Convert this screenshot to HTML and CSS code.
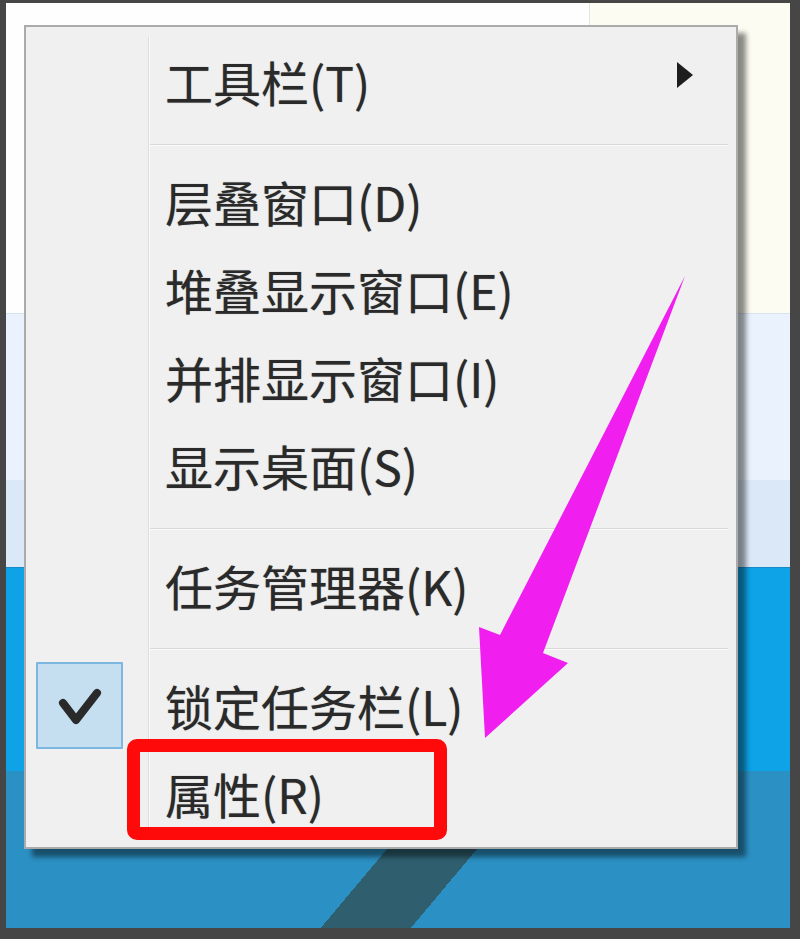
FILE: index.html
```html
<!DOCTYPE html>
<html lang="zh-CN">
<head>
    <meta charset="UTF-8">
    <meta name="viewport" content="width=device-width, initial-scale=1.0">
    <title>任务栏右键菜单</title>
    <link rel="stylesheet" href="styles.css">
</head>
<body>
<div class="screen">
    <div class="wall wall-top">
        <div class="wall-white"></div>
        <div class="wall-cream"></div>
    </div>
    <div class="wall wall-light"></div>
    <div class="wall wall-pale"></div>
    <div class="wall wall-cyan"></div>
    <div class="wall wall-deep"></div>

    <div class="menu">
        <div class="item">
            <div class="gutter"></div>
            <div class="label">工具栏(T)</div>
            <div class="submenu"></div>
        </div>
        <div class="sep"></div>
        <div class="item">
            <div class="gutter"></div>
            <div class="label">层叠窗口(D)</div>
        </div>
        <div class="item">
            <div class="gutter"></div>
            <div class="label">堆叠显示窗口(E)</div>
        </div>
        <div class="item">
            <div class="gutter"></div>
            <div class="label">并排显示窗口(I)</div>
        </div>
        <div class="item">
            <div class="gutter"></div>
            <div class="label">显示桌面(S)</div>
        </div>
        <div class="sep"></div>
        <div class="item">
            <div class="gutter"></div>
            <div class="label">任务管理器(K)</div>
        </div>
        <div class="sep"></div>
        <div class="item">
            <div class="gutter">
                <div class="check">
                    <svg width="83" height="83" viewBox="0 0 83 83">
                        <polyline points="25,39 38,56 59,29" fill="none" stroke="#2a2a2a" stroke-width="8" stroke-linejoin="round" stroke-linecap="round"/>
                    </svg>
                </div>
            </div>
            <div class="label">锁定任务栏(L)</div>
        </div>
        <div class="item">
            <div class="gutter"></div>
            <div class="label">属性(R)</div>
        </div>
    </div>

    <!-- annotations drawn over the screenshot -->
    <div class="highlight"></div>
    <svg class="pointer" width="800" height="939" viewBox="0 0 800 939">
        <polygon points="685,276 543,653 568,663 485,738 479,627 500,635" fill="#f01ff0"/>
    </svg>
</div>
</body>
</html>
```

FILE: styles.css
```css
body {
    margin: 0;
    font-family: "Noto Sans CJK SC", "Noto Sans", sans-serif;
}
.screen {
    position: relative;
    width: 800px;
    height: 939px;
    box-sizing: border-box;
    border-style: solid;
    border-color: #464646;
    border-width: 3px 10px 11px 6px;
    display: flex;
    flex-direction: column;
    overflow: hidden;
}
.wall-top {
    height: 310px;
    display: flex;
    border-bottom: 1px solid #d6e2ee;
}
.wall-white {
    width: 583px;
    background: #fefefe;
    border-right: 1px solid #e4e4e4;
}
.wall-cream {
    flex: 1;
    background: #fcfcf2;
}
.wall-light {
    height: 166px;
    background: #eaf3fd;
}
.wall-pale {
    height: 87px;
    background: #dbe8f7;
}
.wall-cyan {
    height: 203px;
    background: #0ea2e6;
    border-top: 1px solid #1a8ac6;
}
.wall-deep {
    flex: 1;
    background: linear-gradient(130deg, #2b90c3 342px, #2f5f6f 342px, #2f5f6f 411px, #2b90c3 411px);
}

/* context menu */
.menu {
    position: absolute;
    left: 18px;
    top: 22px;
    width: 714px;
    box-sizing: border-box;
    padding: 10px 0 10px;
    background-color: #f0f0f0;
    background-image: linear-gradient(to right, transparent 122px, #dcdcdc 122px, #dcdcdc 123px, #fbfbfb 123px, #fbfbfb 124px, transparent 124px);
    background-repeat: no-repeat;
    background-origin: content-box;
    border: 2px solid #ababab;
    box-shadow: 8px 8px 5px rgba(0, 0, 0, 0.45);
}
.item {
    display: flex;
    align-items: center;
    height: 88px;
}
.gutter {
    width: 122px;
    height: 100%;
    display: flex;
    align-items: center;
    flex-shrink: 0;
}
.label {
    flex: 1;
    padding-left: 17px;
    font-size: 48px;
    line-height: 1;
    color: #2a2a2a;
    text-shadow: 0 0 1px rgba(0, 0, 0, 0.45);
    white-space: nowrap;
}
.submenu {
    align-self: flex-start;
    margin-top: 25px;
    margin-right: 43px;
    width: 0;
    height: 0;
    border-left: 16px solid #1e1e1e;
    border-top: 13px solid transparent;
    border-bottom: 13px solid transparent;
}
.sep {
    height: 0;
    margin: 19px 8px 11px 124px;
    border-top: 1px solid #d8d8d8;
    border-bottom: 1px solid #fbfbfb;
}
.check {
    margin-left: 10px;
    margin-top: 1px;
    width: 83px;
    height: 83px;
    background: #c5dff0;
    border: 2px solid #7cb7e2;
    border-radius: 1px;
}
.check svg {
    display: block;
}

/* annotations */
.highlight {
    position: absolute;
    left: 121px;
    top: 736px;
    width: 294px;
    height: 75px;
    border: 13px solid #ff0a0a;
    border-radius: 10px;
}
.pointer {
    position: absolute;
    left: -6px;
    top: -3px;
}
```
